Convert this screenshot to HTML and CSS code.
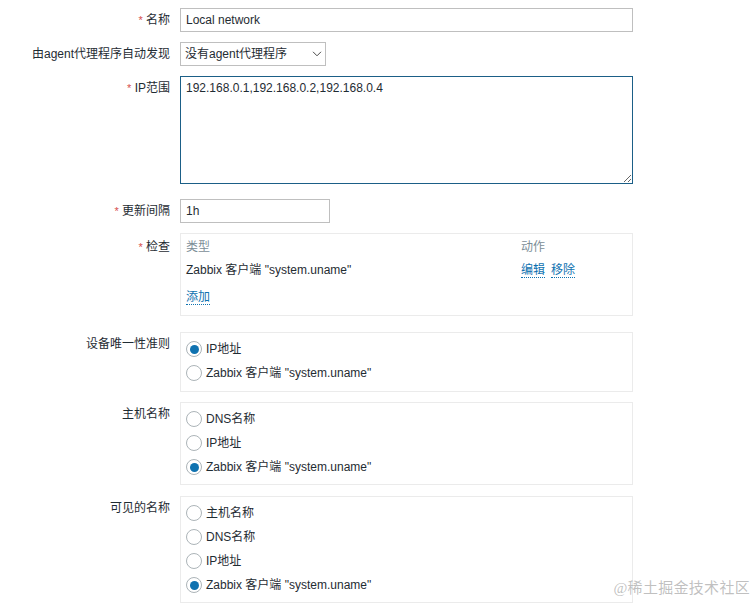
FILE: index.html
```html
<!DOCTYPE html>
<html lang="zh">
<head>
<meta charset="utf-8">
<title>自动发现规则</title>
<link rel="stylesheet" href="styles.css">
</head>
<body>
<form class="form">
  <div class="row">
    <label class="lbl"><span class="req">*</span> 名称</label>
    <input class="txt txt-wide" type="text" value="Local network">
  </div>
  <div class="row">
    <label class="lbl">由agent代理程序自动发现</label>
    <div class="select">
      <span>没有agent代理程序</span>
      <svg class="chev" width="10" height="6" viewBox="0 0 10 6"><path d="M1 0.8l4 4 4-4" fill="none" stroke="#4a4a4a" stroke-width="1"/></svg>
    </div>
  </div>
  <div class="row row-after-area">
    <label class="lbl"><span class="req">*</span> IP范围</label>
    <textarea class="area">192.168.0.1,192.168.0.2,192.168.0.4</textarea>
  </div>
  <div class="row">
    <label class="lbl"><span class="req">*</span> 更新间隔</label>
    <input class="txt txt-short" type="text" value="1h">
  </div>
  <div class="row row-gap16">
    <label class="lbl lbl-check"><span class="req">*</span> 检查</label>
    <div class="box checks">
      <div class="chk-head">类型</div>
      <div class="chk-head">动作</div>
      <div class="chk-cell">Zabbix 客户端 "system.uname"</div>
      <div class="chk-cell"><a class="link">编辑</a><a class="link">移除</a></div>
      <div class="chk-add"><a class="link">添加</a></div>
    </div>
  </div>
  <div class="row">
    <label class="lbl">设备唯一性准则</label>
    <div class="box radios radios-tall">
      <div class="radio"><span class="dot on"></span>IP地址</div>
      <div class="radio"><span class="dot"></span>Zabbix 客户端 "system.uname"</div>
    </div>
  </div>
  <div class="row row-gap11">
    <label class="lbl">主机名称</label>
    <div class="box radios">
      <div class="radio"><span class="dot"></span>DNS名称</div>
      <div class="radio"><span class="dot"></span>IP地址</div>
      <div class="radio"><span class="dot on"></span>Zabbix 客户端 "system.uname"</div>
    </div>
  </div>
  <div class="row">
    <label class="lbl">可见的名称</label>
    <div class="box radios">
      <div class="radio"><span class="dot"></span>主机名称</div>
      <div class="radio"><span class="dot"></span>DNS名称</div>
      <div class="radio"><span class="dot"></span>IP地址</div>
      <div class="radio"><span class="dot on"></span>Zabbix 客户端 "system.uname"</div>
    </div>
  </div>
</form>
<div class="watermark">@稀土掘金技术社区</div>
</body>
</html>
```
FILE: styles.css
```css
html, body {
  margin: 0;
  padding: 0;
  background: #ffffff;
  overflow: hidden;
}
body {
  font-family: "Liberation Sans", Arial, "Noto Sans CJK SC", sans-serif;
  font-size: 12px;
  color: #1f2c33;
  width: 756px;
  height: 603px;
  position: relative;
}
.form {
  padding-top: 8px;
}
.row {
  display: grid;
  grid-template-columns: 170px 453px;
  column-gap: 10px;
  align-items: start;
  margin-bottom: 10px;
}
.row-after-area { margin-bottom: 15px; }
.row-gap16 { margin-bottom: 16px; }
.row-gap11 { margin-bottom: 11px; }
.lbl {
  text-align: right;
  line-height: 24px;
  white-space: nowrap;
}
.lbl-check { padding-top: 2px; }
.req {
  color: #d64e4e;
  font-size: 11px;
}
.txt {
  box-sizing: border-box;
  height: 24px;
  border: 1px solid #bfbfbf;
  padding: 0 5px;
  margin: 0;
  font: inherit;
  color: #1f2c33;
  background: #fff;
  outline: none;
}
.txt-wide { width: 453px; }
.txt-short { width: 150px; }
.select {
  box-sizing: border-box;
  width: 146px;
  height: 24px;
  border: 1px solid #bfbfbf;
  padding: 0 3px 0 4px;
  display: flex;
  align-items: center;
  justify-content: space-between;
  line-height: 22px;
}
.chev { margin-right: 0; }
.area {
  box-sizing: border-box;
  display: block;
  width: 453px;
  height: 108px;
  margin: 0;
  border: 1px solid #1b5f87;
  padding: 4px 5px;
  font: inherit;
  line-height: 14px;
  color: #1f2c33;
  resize: both;
  outline: none;
}
.box {
  box-sizing: border-box;
  width: 453px;
  border: 1px solid #ebebeb;
}
.checks {
  display: grid;
  grid-template-columns: 335px 1fr;
  padding: 2px 5px 7px;
}
.chk-head {
  line-height: 22px;
  height: 22px;
  color: #7c8e97;
}
.chk-cell {
  line-height: 24px;
  height: 24px;
}
.chk-add {
  grid-column: 1 / span 2;
  margin-top: 4px;
  line-height: 22px;
  height: 22px;
}
.link {
  color: #0f72b0;
  text-decoration: none;
  border-bottom: 1px dotted #0f72b0;
  margin-right: 6px;
  cursor: pointer;
}
.radios {
  padding: 4px 5px 5px;
}
.radios-tall {
  padding-bottom: 6px;
}
.radio {
  display: flex;
  align-items: center;
  height: 24px;
  line-height: 24px;
}
.dot {
  box-sizing: border-box;
  width: 16px;
  height: 16px;
  border-radius: 50%;
  border: 1px solid #acb4b8;
  margin-right: 4px;
  display: flex;
  align-items: center;
  justify-content: center;
  background: #fff;
}
.dot.on::after {
  content: "";
  width: 9px;
  height: 9px;
  border-radius: 50%;
  background: #0f72b0;
}
.watermark {
  position: absolute;
  right: 6px;
  bottom: 6px;
  font-family: "Liberation Serif", "Noto Sans CJK SC", serif;
  font-size: 15px;
  color: rgba(150, 150, 150, 0.6);
  letter-spacing: 0.3px;
}
```
